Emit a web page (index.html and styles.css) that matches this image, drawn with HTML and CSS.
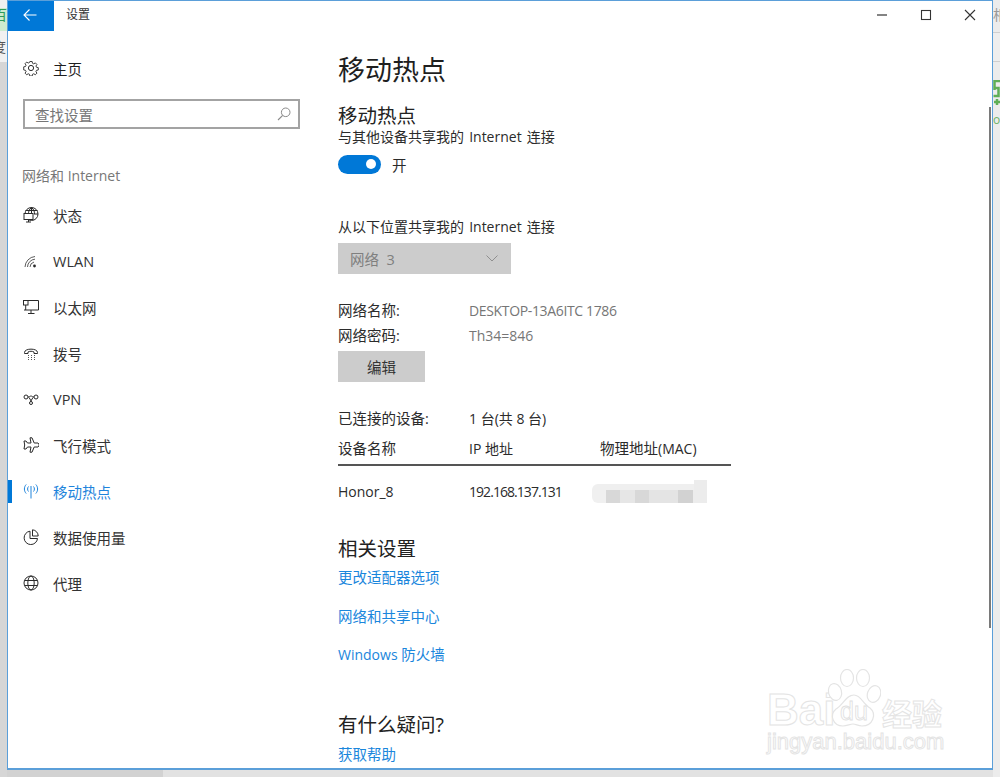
FILE: index.html
```html
<!DOCTYPE html>
<html lang="zh-CN">
<head>
<meta charset="utf-8">
<title>设置</title>
<link rel="stylesheet" href="styles.css">
</head>
<body>
<div class="desktop">
  <div class="behind behind-left">
    <div class="bl-tab"><span>百</span></div>
    <div class="bl-bar"><span>度</span></div>
  </div>
  <div class="behind behind-right">
    <div class="br-tab"><span>相</span></div>
    <div class="br-bar"></div>
    <div class="br-green"><svg width="7" height="30" viewBox="0 0 7 30"><path d="M7 1H1.500V10M.5 8h5v8H.5M1 22h6M4 19v6" fill="none" stroke="#5fae57" stroke-width="2.500"/></svg></div>
    <div class="br-text">ol</div>
  </div>
  <div class="window">
    <header class="titlebar">
      <button class="back" aria-label="返回"><svg width="14" height="14" viewBox="0 0 14 14"><path d="M1 7h12.500M6.500 1.500 1 7l5.500 5.500" fill="none" stroke="#fff" stroke-width="1.100"/></svg></button>
      <span class="app-title">设置</span>
      <div class="controls">
        <span class="ctl"><svg width="12" height="12" viewBox="0 0 12 12"><path d="M1 6h10" stroke="#333" stroke-width="1.200"/></svg></span>
        <span class="ctl"><svg width="12" height="12" viewBox="0 0 12 12"><rect x="1.500" y="1.500" width="9" height="9" fill="none" stroke="#333" stroke-width="1.100"/></svg></span>
        <span class="ctl"><svg width="12" height="12" viewBox="0 0 12 12"><path d="M1 1l10 10M11 1 1 11" stroke="#333" stroke-width="1.100"/></svg></span>
      </div>
    </header>
    <div class="body">
      <aside class="sidebar">
        <div class="home">
          <svg class="ico" width="16" height="16" viewBox="0 0 16 16"><g fill="none" stroke="#2a2a2a" stroke-width="1"><circle cx="8" cy="8" r="2.600"/><path d="M6.700.800h2.600l.4 2 1.400.6 1.700-1.100 1.800 1.800-1.100 1.700.6 1.400 2 .4v2.600l-2 .4-.6 1.400 1.100 1.700-1.800 1.800-1.700-1.100-1.400.6-.4 2H6.700l-.4-2-1.400-.6-1.700 1.100-1.800-1.800 1.100-1.700-.6-1.400-2-.4V6.700l2-.4.6-1.400-1.100-1.700 1.800-1.800 1.700 1.100 1.400-.6z" transform="translate(.8 .8) scale(.9)"/></g></svg>
          <span>主页</span>
        </div>
        <div class="search">
          <span>查找设置</span>
          <svg width="14" height="14" viewBox="0 0 14 14"><circle cx="8.700" cy="5.300" r="4.300" fill="none" stroke="#8a8a8a"/><path d="M5.700 8.300 1 13" stroke="#8a8a8a" stroke-width="1.100"/></svg>
        </div>
        <div class="group">网络和 Internet</div>
        <nav class="nav">
          <a class="item"><svg class="ico" width="16" height="16" viewBox="0 0 16 16"><g fill="none" stroke="#2a2a2a" stroke-width="1"><circle cx="8.500" cy="7" r="6.500"/><path d="M8.500.5c-2.500 2-3 4-3 6.500M8.500.5c2.500 2 3 4 3 6.500M8.500.5V7M2.500 3.500h12M11 7h4"/><rect x="1" y="6.500" width="9" height="6" fill="#fff"/><path d="M5.500 12.500V15M3 15h5"/></g></svg><span>状态</span></a>
          <a class="item"><svg class="ico" width="16" height="16" viewBox="0 0 16 16"><g fill="none" stroke="#4a4a4a" stroke-width=".9"><path d="M2 14A11 11 0 0 1 12 3.500"/><path d="M4.500 14A8 8 0 0 1 12 6.200"/><path d="M7 14A5.500 5.500 0 0 1 11 9"/></g><circle cx="11.500" cy="13" r="1.400" fill="#2a2a2a"/></svg><span class="en">WLAN</span></a>
          <a class="item"><svg class="ico" width="16" height="16" viewBox="0 0 16 16"><g fill="none" stroke="#2a2a2a" stroke-width="1"><path d="M4.500 1.500H15.500V11H1"/><rect x=".5" y="1.500" width="4.500" height="4.500"/><path d="M2.700 6v5M8 11v3M5 14.500h6.500"/></g></svg><span>以太网</span></a>
          <a class="item"><svg class="ico" width="16" height="16" viewBox="0 0 16 16"><path d="M1.500 7.500C1.500 3 14.500 3 14.500 7.500V8.500H11V7c-1.500-1-4.500-1-6 0v1.500H1.500z" fill="none" stroke="#2a2a2a"/><path d="M5 10.500h1m2 0h1m2 0h1M5 12.500h1m2 0h1m2 0h1M5 14.500h1m2 0h1m2 0h1" stroke="#555" stroke-width="1"/></svg><span>拨号</span></a>
          <a class="item"><svg class="ico" width="16" height="16" viewBox="0 0 16 16"><g fill="none" stroke="#2a2a2a" stroke-width="1"><circle cx="3" cy="6" r="2"/><circle cx="13" cy="6" r="2"/><path d="M5 6c2 0 2-1 3-1s1 1 3 1M6 6.500l2.500 4M10 6.500l-2.500 4"/><circle cx="8" cy="12" r="1.500"/></g></svg><span class="en">VPN</span></a>
          <a class="item"><svg class="ico" width="16" height="16" viewBox="0 0 16 16"><path d="M9 .800 11.200 6H15c1.500 1 1.500 3 0 4h-3.800L9 15.200H7L8 10H4.500L3 12H1l.7-4L1 4h2l1.500 2H8L7 .800z" fill="none" stroke="#2a2a2a"/></svg><span>飞行模式</span></a>
          <a class="item active"><svg class="ico" width="16" height="16" viewBox="0 0 16 16"><g fill="none" stroke="#1e84dc" stroke-width="1"><path d="M3.200 1.500C.8 4 .8 8 3.200 10.500M12.800 1.500c2.400 2.500 2.400 6.500 0 9M5.500 3.500c-1.200 1.300-1.200 3.700 0 5M10.500 3.500c1.200 1.300 1.200 3.700 0 5M8 3v12.500"/></g></svg><span>移动热点</span></a>
          <a class="item"><svg class="ico" width="16" height="16" viewBox="0 0 16 16"><g fill="none" stroke="#2a2a2a" stroke-width="1"><path d="M7 2.200A6.700 6.700 0 1 0 14.500 9.500H7z"/><path d="M9.500.800A6.200 6.200 0 0 1 15.200 7H9.500z"/></g></svg><span>数据使用量</span></a>
          <a class="item"><svg class="ico" width="16" height="16" viewBox="0 0 16 16"><g fill="none" stroke="#2a2a2a" stroke-width="1"><circle cx="8" cy="8" r="7"/><ellipse cx="8" cy="8" rx="3.200" ry="7"/><path d="M1.500 5.500h13M1.500 10.500h13"/></g></svg><span>代理</span></a>
        </nav>
      </aside>
      <main class="content">
        <h1>移动热点</h1>
        <h2 class="first">移动热点</h2>
        <p class="line first-line">与其他设备共享我的 Internet 连接</p>
        <div class="toggle-row"><span class="toggle"><i></i></span><span>开</span></div>
        <p class="line source">从以下位置共享我的 Internet 连接</p>
        <div class="select"><span>网络&nbsp; 3</span><svg width="12" height="7" viewBox="0 0 12 7"><path d="M.5.500 6 6l5.500-5.500" fill="none" stroke="#8f8f8f"/></svg></div>
        <div class="kv name"><span>网络名称:</span><span class="muted en desktop-name">DESKTOP-13A6ITC 1786</span></div>
        <div class="kv pass"><span>网络密码:</span><span class="muted en">Th34=846</span></div>
        <button class="edit">编辑</button>
        <div class="kv connected"><span>已连接的设备:</span><span class="en">1 台(共 8 台)</span></div>
        <div class="table-head"><span>设备名称</span><span class="en">IP 地址</span><span>物理地址<span class="en">(MAC)</span></span></div>
        <div class="table-row"><span class="en">Honor_8</span><span class="en ip">192.168.137.131</span><span class="mac"><i></i><i></i><i></i><i></i><i></i><i></i><i></i><i></i><i></i></span></div>
        <h2 class="related">相关设置</h2>
        <a class="link l1">更改适配器选项</a>
        <a class="link l2">网络和共享中心</a>
        <a class="link l2b"><span class="en">Windows</span> 防火墙</a>
        <h2 class="faq">有什么疑问?</h2>
        <a class="link l3">获取帮助</a>
      </main>
    </div>
    <div class="scrollbar"></div>
    <div class="watermark">
      <span class="wm-bai">Bai</span>
      <svg class="wm-paw" width="54" height="60" viewBox="0 0 54 60"><g fill="#fff" stroke="#e4e4e4" stroke-width="1.200"><ellipse cx="8" cy="23" rx="6.500" ry="8.500" transform="rotate(-15 8 23)"/><ellipse cx="20" cy="9" rx="6.500" ry="8.500"/><ellipse cx="36" cy="9" rx="6.500" ry="8.500"/><ellipse cx="47" cy="25" rx="6.500" ry="8.500" transform="rotate(20 47 25)"/><path d="M27 26c7 0 9 9 16 13 7 6 3 18-8 18-4 0-6-2-9-2s-6 2-10 2C6 57 2 46 9 40c7-4 10-14 18-14z"/></g><text x="27" y="51" text-anchor="middle" class="wm-du">du</text></svg>
      <span class="wm-cn">经验</span>
      <span class="wm-url">jingyan.baidu.com</span>
    </div>
  </div>
</div>
</body>
</html>
```
FILE: styles.css
```css
* { box-sizing: border-box; }
html, body { margin: 0; padding: 0; }
body {
  width: 1000px;
  height: 777px;
  overflow: hidden;
  font-family: "Open Sans", "Noto Sans CJK SC", sans-serif;
  font-size: 14.500px;
  color: #2b2b2b;
}
.en { font-size: 14px; }
.desktop {
  position: relative;
  width: 1000px;
  height: 777px;
  padding: 0 7px 7px 7px;
  background: linear-gradient(90deg, #d2d2d2 0 163px, #e2e2e2 163px);
}
.behind { position: absolute; top: 0; width: 7px; height: 777px; overflow: hidden; background: #d6d6d6; }
.behind-left { left: 0; }
.behind-right { right: 0; background: #ececec; }
.bl-tab { height: 31px; padding-top: 7px; background: linear-gradient(#f0f0f0 0 8px, #cdeccf 8px); color: #2e9c5a; font-size: 14px; line-height: 16px; }
.bl-tab span { display: block; margin-left: -7px; }
.bl-bar { height: 31px; padding-top: 8px; background: #f1f1f1; color: #555; font-size: 14px; line-height: 16px; }
.bl-bar span { display: block; margin-left: -8px; }
.br-tab { height: 32px; padding-top: 7px; color: #999; font-size: 14px; line-height: 16px; }
.br-bar { height: 30px; border-top: 1px solid #cfcfcf; border-bottom: 1px solid #cfcfcf; background: #eeeeee; }
.br-green { margin-top: 18px; height: 30px; }
.br-text { margin-top: 2px; color: #6fb368; font-size: 12px; line-height: 16px; }

.window {
  position: relative;
  width: 986px;
  height: 770px;
  background: #fff;
  border: 1px solid #5b9fd9;
  border-bottom-width: 2px;
  display: flex;
  flex-direction: column;
  overflow: hidden;
}
.titlebar { flex: none; height: 30px; display: flex; align-items: flex-start; }
.back { width: 46px; height: 30px; padding: 0 2px 2px 0; border: 0; background: #0078d7; display: flex; align-items: center; justify-content: center; }
.app-title { margin-left: 12px; font-size: 12px; line-height: 28px; color: #333; }
.controls { margin-left: auto; display: flex; }
.ctl { width: 44px; height: 28px; display: flex; align-items: center; justify-content: center; }
.body { flex: 1; display: flex; min-height: 0; }
.sidebar { flex: none; width: 330px; padding-top: 25px; }
.ico { flex: none; margin-right: 14px; }
.home { display: flex; align-items: center; height: 24px; padding-left: 15px; color: #1f1f1f; }
.search {
  margin: 19px 0 0 15px;
  width: 277px;
  height: 30px;
  border: 2px solid #a3a3a3;
  padding: 0 7px 0 10px;
  display: flex;
  align-items: center;
  justify-content: space-between;
  color: #767676;
}
.group { margin: 37px 0 0 14px; height: 20px; font-size: 14px; line-height: 20px; color: #777; }
.nav { margin-top: 6px; display: flex; flex-direction: column; }
.item { position: relative; height: 46px; display: flex; align-items: center; padding-left: 15px; color: #333; }
.item .en { font-size: 14.500px; }
.item.active { color: #1e84dc; }
.item.active::before { content: ""; position: absolute; left: 0; top: 12px; width: 4px; height: 23px; background: #0078d7; }
.content { flex: 1; min-width: 0; }
h1, h2, p { margin: 0; font-weight: 400; }
h1 { margin-top: 19px; height: 40px; line-height: 40px; font-size: 27px; color: #1f1f1f; }
h2 { height: 28px; line-height: 28px; font-size: 19.500px; color: #222; }
h2.first { margin-top: 12px; }
.line { height: 20px; line-height: 20px; font-size: 14px; word-spacing: 1.500px; }
.first-line { margin-top: -3px; }
.toggle-row { margin-top: 7px; height: 20px; display: flex; align-items: center; gap: 11px; }
.toggle { width: 43px; height: 19px; border-radius: 10px; background: #0078d7; position: relative; }
.toggle i { position: absolute; right: 5px; top: 4.500px; width: 10px; height: 10px; border-radius: 50%; background: #fff; }
.source { margin-top: 43px; }
.select { margin-top: 6px; width: 173px; height: 31px; background: #cccccc; color: #7f7f7f; padding: 0 13px 0 12px; display: flex; align-items: center; justify-content: space-between; }
.kv { display: grid; grid-template-columns: 131px auto; height: 20px; line-height: 20px; }
.kv .muted { color: #767676; }
.desktop-name { letter-spacing: -.35px; }
.kv.name { margin-top: 27px; }
.kv.pass { margin-top: 5px; }
.edit { display: block; margin-top: 5px; width: 87px; height: 31px; border: 0; background: #cccccc; color: #333; font: inherit; padding: 0; }
.kv.connected { margin-top: 27px; }
.table-head { margin-top: 10px; width: 393px; height: 27px; line-height: 20px; display: grid; grid-template-columns: 131px 131px auto; border-bottom: 2px solid #555; }
.table-row { margin-top: 16px; height: 20px; line-height: 20px; display: grid; grid-template-columns: 131px 131px auto; }
.ip { letter-spacing: -.95px; }
.mac { position: relative; }
.mac i { position: absolute; top: 8px; height: 13px; filter: blur(.7px); }
.mac i:nth-child(1) { left: -8px; top: 2px; width: 102px; height: 7px; background: #efefef; border-radius: 6px 0 0 0; }
.mac i:nth-child(2) { left: -8px; width: 14px; background: #f0f0f0; border-radius: 0 0 0 6px; }
.mac i:nth-child(3) { left: 6px; width: 14px; background: #d8d8d8; }
.mac i:nth-child(4) { left: 20px; width: 15px; background: #e6e6e6; }
.mac i:nth-child(5) { left: 35px; width: 14px; background: #d8d8d8; }
.mac i:nth-child(6) { left: 49px; width: 29px; background: #e4e4e4; }
.mac i:nth-child(7) { left: 78px; width: 15px; background: #d2d2d2; }
.mac i:nth-child(8) { left: 93px; width: 14px; background: #ececec; }
.mac i:nth-child(9) { left: 94px; top: -2px; width: 13px; height: 11px; background: #ececec; }
h2.related { margin-top: 33px; }
.link { display: block; height: 20px; line-height: 20px; color: #1a86dc; }
.l1 { margin-top: 5px; }
.l2 { margin-top: 19px; }
.l2b { margin-top: 18px; }
h2.faq { margin-top: 46px; }
.l3 { margin-top: 6px; }
.scrollbar { position: absolute; left: 981px; top: 106px; width: 2px; height: 521px; background: #7a7a7a; }
.watermark { position: absolute; left: 0; top: 0; width: 100%; height: 100%; pointer-events: none; }
.wm-bai, .wm-cn, .wm-url { position: absolute; color: #fff; -webkit-text-stroke: 1px #e4e4e4; font-family: "Liberation Sans", sans-serif; white-space: nowrap; }
.wm-bai { left: 759px; top: 690px; font-size: 44px; line-height: 38px; font-weight: 700; }
.wm-cn { left: 874px; top: 695px; font-size: 30px; line-height: 32px; font-family: "Noto Sans CJK SC", sans-serif; font-weight: 700; }
.wm-url { left: 759px; top: 729px; font-size: 22px; line-height: 24px; }
.wm-paw { position: absolute; left: 819px; top: 668px; }
.wm-du { font-family: "Liberation Sans", sans-serif; font-size: 25px; fill: #fff; stroke: #e0e0e0; stroke-width: .8; }
```
